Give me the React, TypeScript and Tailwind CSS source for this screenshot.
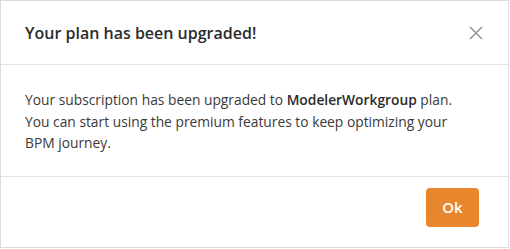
export default function App() {
  return (
    <div className="w-[510px] h-[249px] bg-white" style={{ fontFamily: '"Open Sans", sans-serif' }}>
      <div className="w-[509px] h-[248px] border border-[#dcdcdc] flex flex-col">
        <div className="h-[64px] flex items-center justify-between pl-6 pr-[25px] border-b border-[#e2e2e2]">
          <h2 className="text-[16px] font-semibold text-[#2b2b2b] leading-none pt-[1px]">
            Your plan has been upgraded!
          </h2>
          <button className="w-[14px] h-[14px] flex items-center justify-center text-[#9a9a9a]">
            <svg width="14" height="14" viewBox="0 0 14 14" fill="none" stroke="currentColor" strokeWidth="1.6">
              <path d="M1 1L13 13M13 1L1 13" />
            </svg>
          </button>
        </div>
        <div className="h-[112px] border-b border-[#e2e2e2] pl-6 pr-[38px] pt-[24px]">
          <p className="text-[13.8px] leading-[21.5px] text-[#3a3a3a]">
            Your subscription has been upgraded to <span className="font-semibold text-[#2b2b2b]">ModelerWorkgroup</span> plan.
            <br />
            You can start using the premium features to keep optimizing your BPM journey.
          </p>
        </div>
        <div className="flex-1 flex items-start justify-end pr-[29px] pt-[11px]">
          <button className="w-[53px] h-[39px] rounded-[4px] bg-[#e8862d] text-white text-[15px] font-semibold">
            Ok
          </button>
        </div>
      </div>
    </div>
  );
}
